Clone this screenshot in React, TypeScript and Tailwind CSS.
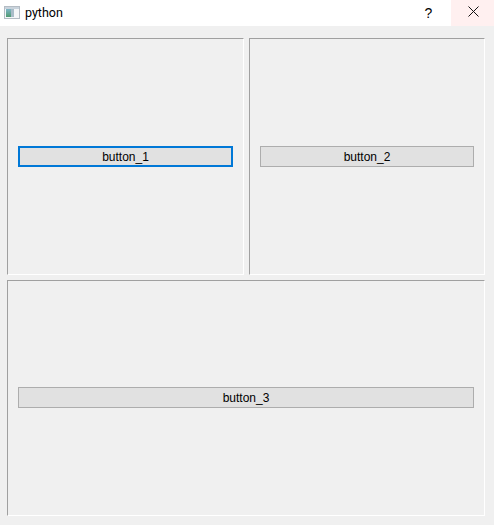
function Panel({ label, focus, className }: { label: string; focus?: boolean; className: string }) {
  return (
    <div className={`flex items-center px-[10px] border border-t-[#a0a0a0] border-l-[#a0a0a0] border-r-white border-b-white ${className}`}>
      <button
        className={`w-full h-[21px] flex items-center justify-center bg-[#e1e1e1] text-[12px] text-black border ${focus ? "border-2 border-[#0078d7]" : "border-[#adadad]"}`}
        style={{ fontFamily: '"Liberation Sans", sans-serif' }}
      >
        {label}
      </button>
    </div>
  );
}

export default function App() {
  return (
    <div className="w-[494px] h-[525px] bg-[#f0f0f0] flex flex-col overflow-hidden">
      <div className="h-[26px] bg-white flex items-center shrink-0">
        <svg width="16" height="16" viewBox="0 0 16 16" className="ml-[4px]">
          <defs>
            <linearGradient id="g" x1="0" y1="0" x2="0" y2="1">
              <stop offset="0" stopColor="#7fb5c9" />
              <stop offset="1" stopColor="#4f9a70" />
            </linearGradient>
          </defs>
          <rect x="0.5" y="1.5" width="15" height="12" fill="#f4f6f8" stroke="#b4bcc4" />
          <rect x="1" y="2" width="14" height="2" fill="#c9d3dc" />
          <rect x="2" y="4" width="5" height="8" fill="url(#g)" />
          <rect x="7" y="4" width="3" height="8" fill="#a9bcc8" />
        </svg>
        <span className="ml-[5px] text-[12.5px] text-black" style={{ fontFamily: 'Roboto, sans-serif' }}>python</span>
        <span className="ml-auto mr-[1px] w-[43px] text-center text-[14px] text-black" style={{ fontFamily: '"Liberation Sans", sans-serif' }}>?</span>
        <div className="w-[43px] h-full bg-[#fff0f0] flex items-center justify-center pb-[3px] pl-[1px]">
          <svg width="11" height="11" viewBox="0 0 11 11">
            <path d="M0.5 0.5L10.5 10.5M10.5 0.5L0.5 10.5" stroke="#111" strokeWidth="1" fill="none" />
          </svg>
        </div>
      </div>
      <div className="pt-[12px] pl-[7px] flex flex-col gap-[5px]">
        <div className="flex gap-[5px]">
          <Panel label="button_1" focus className="w-[237px] h-[237px]" />
          <Panel label="button_2" className="w-[236px] h-[237px]" />
        </div>
        <Panel label="button_3" className="w-[478px] h-[236px] pb-[1px]" />
      </div>
    </div>
  );
}
